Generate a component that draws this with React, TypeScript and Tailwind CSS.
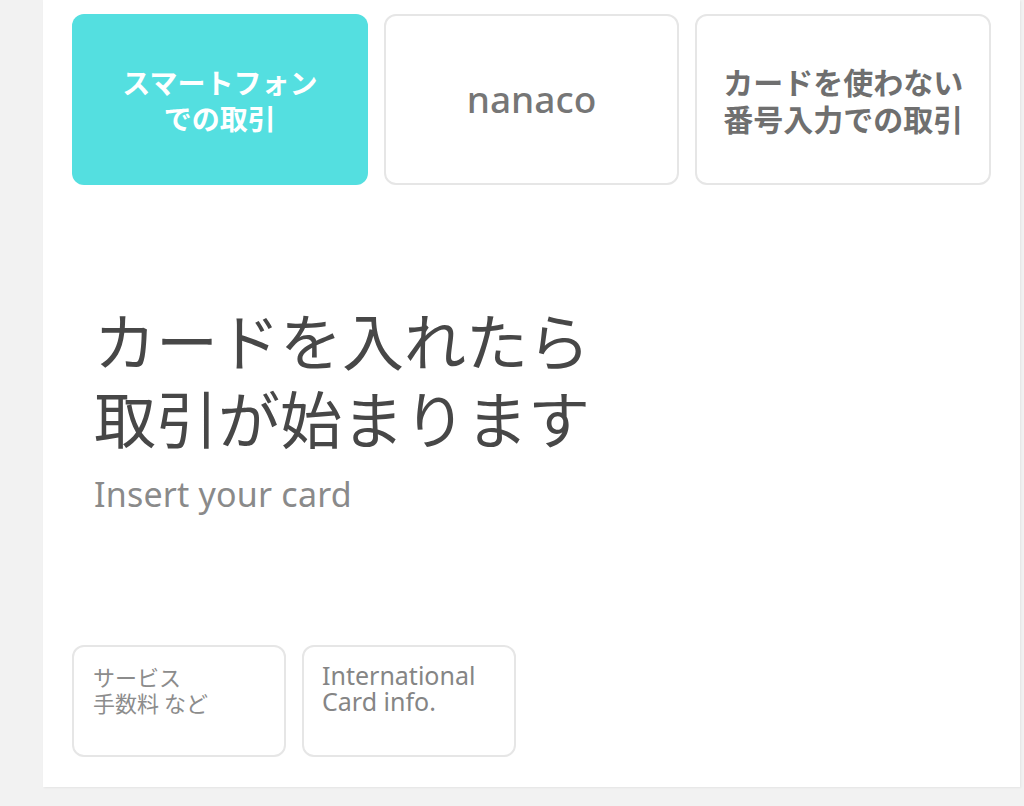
import React from "react";

const font = "font-['Noto_Sans','Noto_Sans_CJK_JP',sans-serif]";

export default function App() {
  return (
    <div className={`w-[1024px] h-[806px] bg-[#f2f2f2] flex ${font}`}>
      <div className="ml-[43px] w-[977px] h-[787px] bg-white shadow-[1px_1px_2px_rgba(0,0,0,0.06)] flex flex-col px-[29px] pt-[14px] pb-[30px]">
        <div className="grid grid-cols-3 gap-[16px] h-[171px]">
          <div className="rounded-[12px] bg-[#54dfe0] flex items-center justify-center text-center text-white font-['Noto_Sans_CJK_JP',sans-serif] font-bold text-[28px] leading-[36px]">
            スマートフォン
            <br />
            での取引
          </div>
          <div className="rounded-[12px] border-2 border-[#e6e6e6] flex items-center justify-center text-[#767676] font-['Noto_Sans',sans-serif] font-medium text-[37px] leading-[44px] pb-[2px]">
            nanaco
          </div>
          <div className="rounded-[12px] border-2 border-[#e6e6e6] flex items-center justify-center text-center text-[#6f6f6f] font-['Noto_Sans_CJK_JP',sans-serif] font-bold text-[30px] leading-[37px]">
            カードを使わない
            <br />
            番号入力での取引
          </div>
        </div>

        <div className="mt-[115px] pl-[22px]">
          <div className="font-['Noto_Sans_CJK_JP',sans-serif] text-[62px] leading-[78px] text-[#474747]">
            カードを入れたら
            <br />
            取引が始まります
          </div>
          <div className="mt-[18px] font-['Noto_Sans',sans-serif] text-[34px] leading-[40px] tracking-[0.2px] text-[#8a8a8a]">
            Insert your card
          </div>
        </div>

        <div className="mt-auto flex gap-[16px]">
          <div className="w-[214px] h-[112px] rounded-[12px] border-2 border-[#e6e6e6] pl-[19px] pt-[16px] font-['Noto_Sans_CJK_JP',sans-serif] text-[22px] leading-[26px] text-[#8c8c8c]">
            サービス
            <br />
            手数料 など
          </div>
          <div className="w-[214px] h-[112px] rounded-[12px] border-2 border-[#e6e6e6] pl-[18px] pt-[15px] font-['Noto_Sans',sans-serif] text-[25px] leading-[26px] text-[#858585]">
            International
            <br />
            Card info.
          </div>
        </div>
      </div>
    </div>
  );
}
